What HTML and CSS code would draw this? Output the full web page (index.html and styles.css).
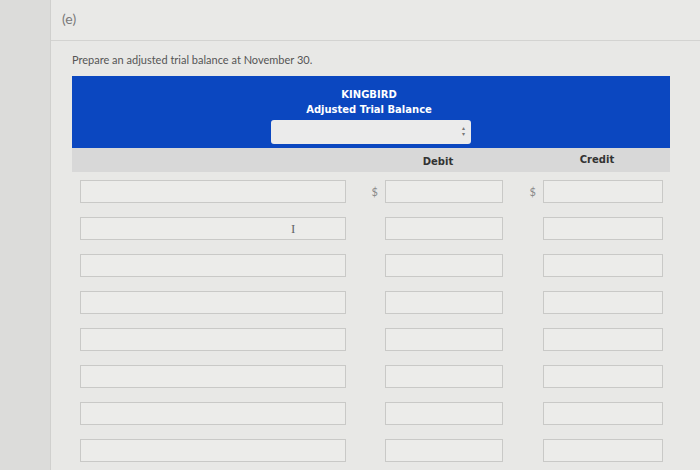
FILE: index.html
```html
<!DOCTYPE html>
<html>
<head>
<meta charset="utf-8">
<link rel="stylesheet" href="styles.css">
</head>
<body>
<div class="page">
  <div class="strip"></div>
  <div class="panel">
    <div class="part">(e)</div>
    <div class="content">
      <p class="prompt">Prepare an adjusted trial balance at November 30.</p>
      <div class="sheet">
        <div class="banner">
          <div class="company">KINGBIRD</div>
          <div class="title">Adjusted Trial Balance</div>
          <div class="select"><span class="arrows">&#9652;<br>&#9662;</span></div>
        </div>
        <div class="colhead">
          <span></span><span></span><span></span><span class="h">Debit</span><span></span><span class="h credit">Credit</span>
        </div>
        <div class="rows">
          <div class="row"><div class="inp acct"></div><span class="cur">$</span><div class="inp"></div><span class="cur">$</span><div class="inp"></div></div>
          <div class="row"><div class="inp acct"><span class="ibeam">I</span></div><span class="cur"></span><div class="inp"></div><span class="cur"></span><div class="inp"></div></div>
          <div class="row"><div class="inp acct"></div><span class="cur"></span><div class="inp"></div><span class="cur"></span><div class="inp"></div></div>
          <div class="row"><div class="inp acct"></div><span class="cur"></span><div class="inp"></div><span class="cur"></span><div class="inp"></div></div>
          <div class="row"><div class="inp acct"></div><span class="cur"></span><div class="inp"></div><span class="cur"></span><div class="inp"></div></div>
          <div class="row"><div class="inp acct"></div><span class="cur"></span><div class="inp"></div><span class="cur"></span><div class="inp"></div></div>
          <div class="row"><div class="inp acct"></div><span class="cur"></span><div class="inp"></div><span class="cur"></span><div class="inp"></div></div>
          <div class="row"><div class="inp acct"></div><span class="cur"></span><div class="inp"></div><span class="cur"></span><div class="inp"></div></div>
        </div>
      </div>
    </div>
  </div>
</div>
</body>
</html>
```
FILE: styles.css
```css
html, body {
  margin: 0;
  padding: 0;
  width: 700px;
  height: 470px;
  overflow: hidden;
  background: #e8e8e6;
  font-family: Lato, "Liberation Sans", sans-serif;
}
.page {
  display: flex;
  height: 470px;
}
.strip {
  width: 50px;
  flex: none;
  background: #dcdcda;
  border-right: 1px solid #d0d0ce;
}
.panel {
  flex: 1;
  display: flex;
  flex-direction: column;
}
.part {
  height: 41px;
  box-sizing: border-box;
  padding: 10px 0 0 11px;
  font-size: 14px;
  color: #7a7a7a;
  border-bottom: 1px solid #d3d3d1;
  background: #e9e9e7;
}
.content {
  padding: 0 0 0 21px;
}
.prompt {
  margin: 12px 0 0 0;
  font-size: 11px;
  color: #555;
  height: 23px;
}
.sheet {
  width: 598px;
}
.banner {
  background: #0b47c0;
  height: 72px;
  box-sizing: border-box;
  padding-top: 11px;
  display: flex;
  flex-direction: column;
  align-items: center;
  color: #fff;
  font-family: "DejaVu Sans", Verdana, sans-serif;
  font-weight: bold;
  font-size: 10px;
  line-height: 15px;
}
.company, .title {
  margin-left: -4px;
}
.select {
  margin-top: 3px;
  width: 200px;
  height: 24px;
  box-sizing: border-box;
  background: #ebebeb;
  border-radius: 3px;
  position: relative;
}
.arrows {
  position: absolute;
  right: 6px;
  top: 5px;
  font-size: 6px;
  line-height: 6px;
  color: #777;
  font-weight: normal;
}
.colhead {
  background: #d8d8d8;
  height: 24px;
  display: grid;
  grid-template-columns: 8px 266px 39px 118px 40px 120px;
  align-items: center;
  font-family: "DejaVu Sans", Verdana, sans-serif;
  font-weight: bold;
  font-size: 10px;
  color: #333;
}
.colhead .h {
  text-align: center;
  margin-left: -12px;
  padding-top: 3px;
}
.colhead .credit {
  margin-left: -12px;
  padding-top: 0;
  padding-bottom: 2px;
}
.rows {
  padding: 8px 0 0 8px;
  display: flex;
  flex-direction: column;
  gap: 14px;
}
.row {
  display: grid;
  grid-template-columns: 266px 39px 118px 40px 120px;
  height: 23px;
  align-items: center;
}
.inp {
  height: 23px;
  box-sizing: border-box;
  border: 1px solid #c9c9c7;
  background: #ececea;
  position: relative;
}
.cur {
  font-size: 11px;
  color: #8a8a8a;
  text-align: right;
  padding-right: 7px;
}
.ibeam {
  position: absolute;
  left: 210px;
  top: 3px;
  font-family: "Liberation Serif", serif;
  font-size: 13px;
  color: #666;
}
```
